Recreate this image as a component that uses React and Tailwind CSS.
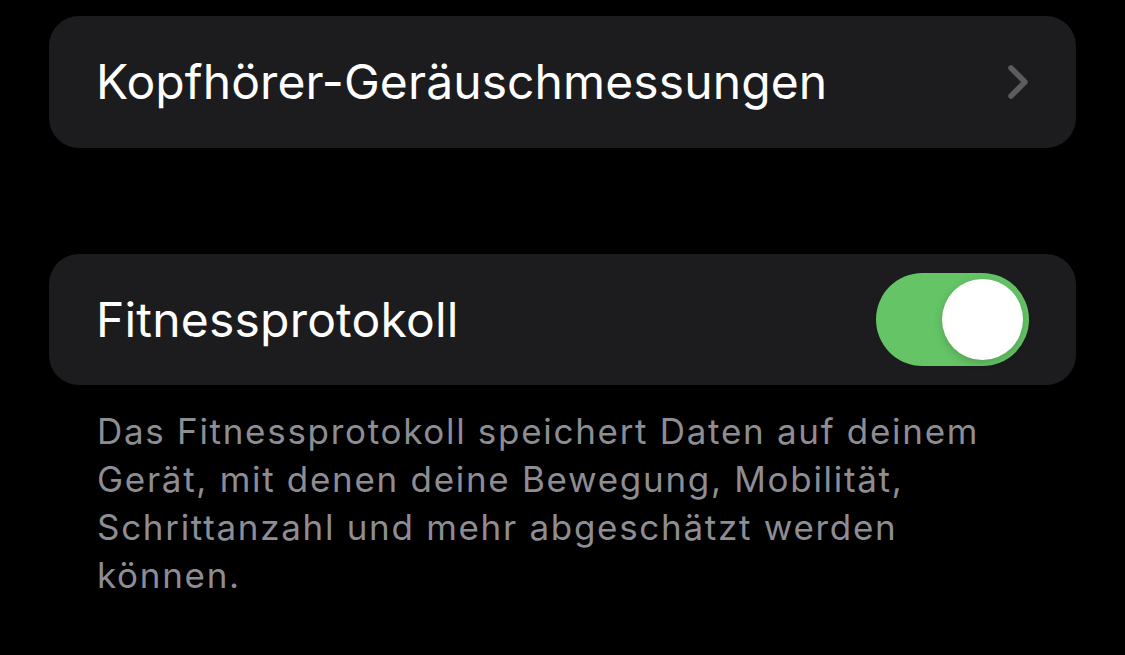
export default function App() {
  return (
    <div
      className="w-[1125px] h-[655px] bg-black overflow-hidden px-[49px] pt-[16px]"
      style={{ fontFamily: 'Inter, "Noto Sans", sans-serif' }}
    >
      <div className="h-[132px] rounded-[30px] bg-[#1c1c1e] flex items-center justify-between pl-[47px] pr-[46px]">
        <span className="text-[48px] text-white tracking-[0.1px]">Kopfhörer-Geräuschmessungen</span>
        <svg width="24" height="38" viewBox="0 0 24 38" fill="none">
          <path d="M5 5 L19 19 L5 33" stroke="#5b5b60" strokeWidth="5.5" strokeLinecap="round" strokeLinejoin="round" />
        </svg>
      </div>

      <div className="mt-[106px] h-[131px] rounded-[30px] bg-[#1c1c1e] flex items-center justify-between pl-[47px] pr-[47px]">
        <span className="text-[48px] text-white tracking-[0.2px]">Fitnessprotokoll</span>
        <div className="w-[153px] h-[93px] rounded-full bg-[#65c466] flex items-center justify-end pr-[6px]">
          <div className="w-[81px] h-[81px] rounded-full bg-white shadow-[0_3px_10px_rgba(0,0,0,0.18)]" />
        </div>
      </div>

      <p className="mt-[22px] pl-[48px] pr-[46px] text-[35px] leading-[48px] tracking-[1.7px] text-[#8d8d93]">
        Das Fitnessprotokoll speichert Daten auf deinem Gerät, mit denen deine Bewegung, Mobilität, Schrittanzahl und mehr abgeschätzt werden können.
      </p>
    </div>
  );
}
